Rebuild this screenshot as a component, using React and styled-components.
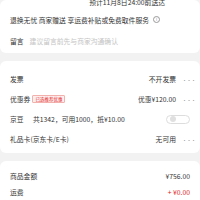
import React from "react";
import styled, { createGlobalStyle } from "styled-components";

const Global = createGlobalStyle`
  html, body {
    margin: 0;
    padding: 0;
    background: #f2f2f2;
    font-family: "Noto Sans CJK SC", "Noto Sans", sans-serif;
  }
`;

const Page = styled.div`
  width: 200px;
  height: 200px;
  overflow: hidden;
  display: flex;
  flex-direction: column;
  gap: 8px;
`;

const Card = styled.div`
  background: #fff;
  border-radius: 6px;
  padding: ${(p) => p.$pad || "0 10px"};
  display: flex;
  flex-direction: column;
`;

const Row = styled.div`
  height: ${(p) => p.$h || 20}px;
  flex-shrink: 0;
  display: flex;
  align-items: center;
  font-size: 6.8px;
  color: #333;
  white-space: nowrap;
`;

const Delivery = styled.div`
  height: 14px;
  margin-top: -5px;
  flex-shrink: 0;
  display: flex;
  justify-content: flex-end;
  align-items: center;
  font-size: 6.8px;
  color: #333;
  padding-right: 25px;
`;

const Label = styled.span`
  width: ${(p) => (p.$w ? p.$w + "px" : "auto")};
  color: #333;
`;

const Hint = styled.span`
  color: #c4c4c4;
  margin-left: 6px;
`;

const Info = styled.span`
  margin-left: 4px;
  width: 5px;
  height: 5px;
  border: 0.6px solid #999;
  border-radius: 50%;
  font-size: 4px;
  line-height: 5px;
  text-align: center;
  color: #999;
`;

const Tag = styled.span`
  margin-left: 2px;
  font-size: 4.5px;
  color: #e2231a;
  background: #fdeeee;
  border: 0.6px solid #f3b1ad;
  border-radius: 1px;
  padding: 0 2px;
  line-height: 6px;
`;

const Right = styled.div`
  margin-left: auto;
  display: flex;
  align-items: center;
  color: ${(p) => p.$color || "#333"};
`;

const More = styled.span`
  margin-left: 6px;
  width: 8px;
  font-size: 5px;
  color: #999;
  letter-spacing: -0.5px;
`;

const Toggle = styled.span`
  margin-left: auto;
  width: 24px;
  height: 9px;
  border: 0.8px solid #ddd;
  border-radius: 6px;
  display: flex;
  align-items: center;
  padding-left: 3px;
  box-sizing: border-box;
`;

const Knob = styled.span`
  width: 6px;
  height: 6px;
  border-radius: 50%;
  background: #e0e0e0;
`;

export default function App() {
  return (
    <Page>
      <Global />
      <Card $pad="0 10px 2px">
        <Delivery>预计11月8日24:00前送达</Delivery>
        <Row $h={21}>
          退换无忧 商家赠送 享运费补贴或免费取件服务
          <Info>i</Info>
        </Row>
        <Row $h={21}>
          <Label>留言</Label>
          <Hint>建议留言前先与商家沟通确认</Hint>
        </Row>
      </Card>
      <Card $pad="8px 10px 4px">
        <Row>
          <Label>发票</Label>
          <Right>
            不开发票<More>···</More>
          </Right>
        </Row>
        <Row>
          <Label>优惠券</Label>
          <Tag>已选推荐优惠</Tag>
          <Right>
            优惠¥120.00<More>···</More>
          </Right>
        </Row>
        <Row>
          <Label $w={23}>京豆</Label>
          共1342，可用1000，抵¥10.00
          <Toggle>
            <Knob />
          </Toggle>
        </Row>
        <Row>
          <Label>礼品卡(京东卡/E卡)</Label>
          <Right>
            无可用<More>···</More>
          </Right>
        </Row>
      </Card>
      <Card $pad="7px 10px">
        <Row $h={16}>
          <Label>商品金额</Label>
          <Right>¥756.00</Right>
        </Row>
        <Row $h={16}>
          <Label>运费</Label>
          <Right $color="#e2231a">+ ¥0.00</Right>
        </Row>
      </Card>
    </Page>
  );
}
